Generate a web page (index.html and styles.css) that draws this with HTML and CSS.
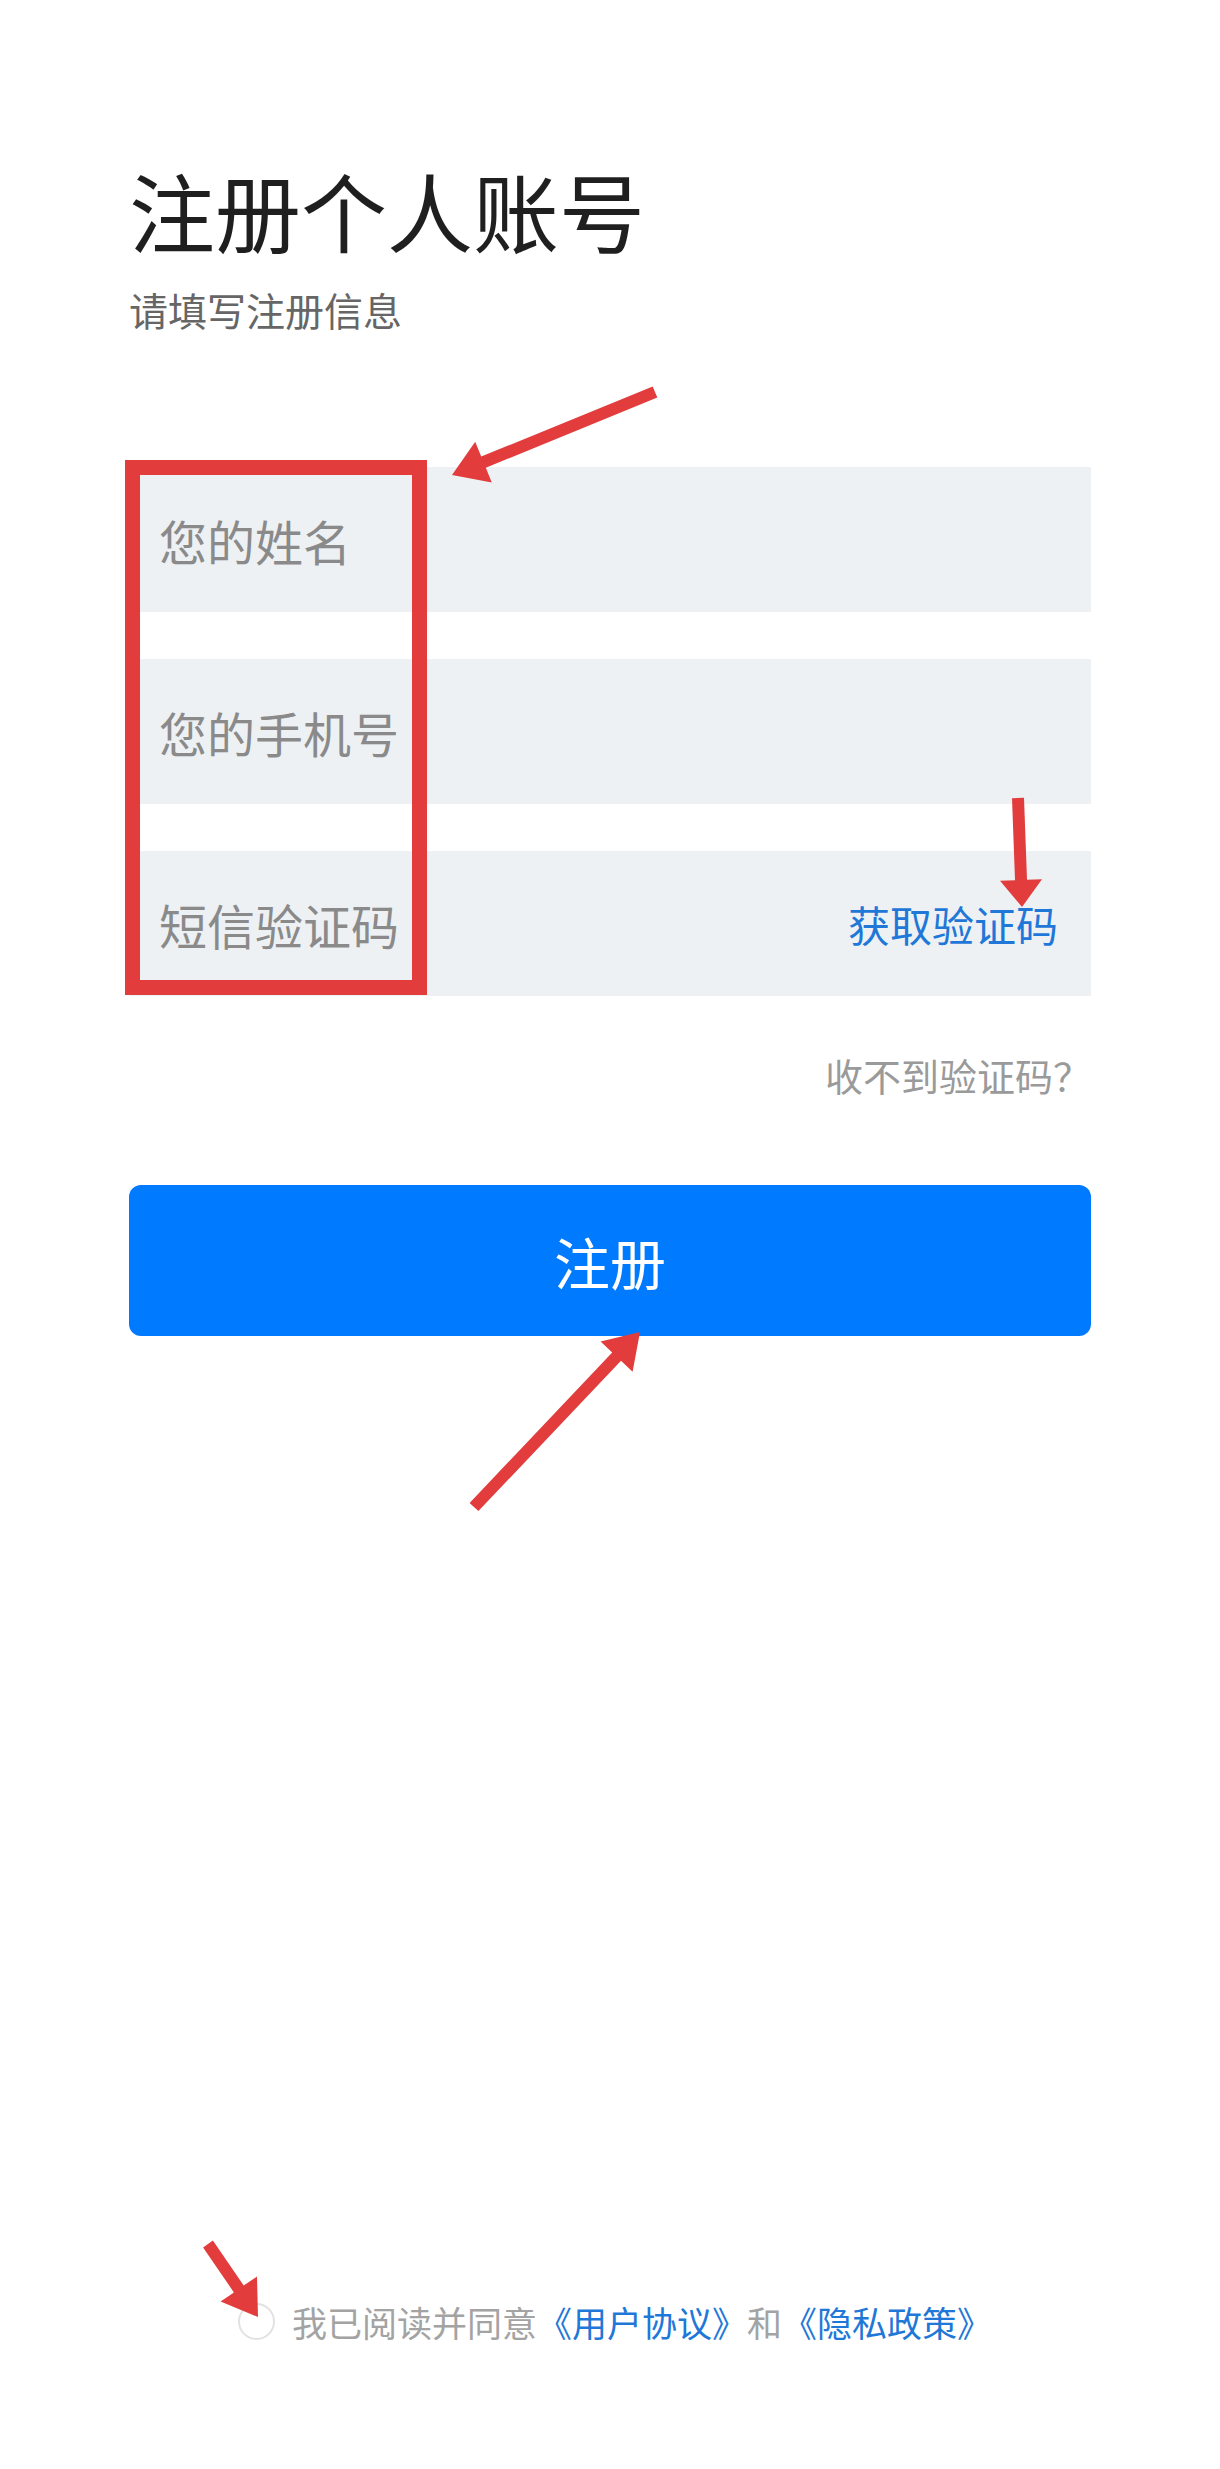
FILE: index.html
```html
<!DOCTYPE html>
<html lang="zh-CN">
<head>
    <meta charset="UTF-8">
    <meta name="viewport" content="width=device-width, initial-scale=1.0">
    <title>注册个人账号</title>
    <link rel="stylesheet" href="styles.css">
</head>
<body>
<div class="page">
    <h1 class="title">注册个人账号</h1>
    <p class="subtitle">请填写注册信息</p>

    <form id="RegForm" class="form" onsubmit="event.preventDefault();">
        <div class="field">
            <input type="text" id="name" name="name" placeholder="您的姓名">
        </div>
        <div class="field">
            <input type="tel" id="mobile" name="mobile" placeholder="您的手机号">
        </div>
        <div class="field">
            <input type="text" id="code" name="code" placeholder="短信验证码">
            <a class="get-code" href="#">获取验证码</a>
        </div>

        <div class="hint">收不到验证码？</div>

        <button type="submit" class="submit">注册</button>
    </form>

    <div class="agree">
        <span class="radio"></span>
        <span>我已阅读并同意<a href="#">《用户协议》</a>和<a href="#">《隐私政策》</a></span>
    </div>

    <!-- red markup drawn over the screenshot -->
    <svg class="marks" width="1220" height="2469" viewBox="0 0 1220 2469">
        <rect x="132.5" y="467.5" width="287" height="520" fill="none" stroke="#e23c3d" stroke-width="15"/>
        <polygon fill="#e23c3d" points="652.7,386.4 481.2,456.6 475.2,441.7 452,475 491.8,482.5 485.8,467.7 657.3,397.6"/>
        <polygon fill="#e23c3d" points="1012,798.2 1015,880.2 1000,880.8 1022,907 1042,879.2 1027,879.8 1024,797.8"/>
        <polygon fill="#e23c3d" points="478.4,1511.1 621,1360.8 632.6,1371.8 640,1332 600.6,1341.6 612.2,1352.6 469.6,1502.9"/>
        <polygon fill="#e23c3d" points="203.1,2247.4 233.9,2292.4 220.6,2301.4 258,2317 257,2276.6 243.7,2285.6 212.9,2240.6"/>
    </svg>
</div>
</body>
</html>
```

FILE: styles.css
```css
body {
    margin: 0;
    background: #fff;
    font-family: "Noto Sans CJK SC", "Noto Sans", sans-serif;
    text-spacing-trim: space-all;
}

.page {
    position: relative;
    min-height: 2469px;
    box-sizing: border-box;
    padding: 167px 129px 129px;
    display: flex;
    flex-direction: column;
}

.title {
    margin: 0;
    font-size: 86px;
    line-height: 1;
    font-weight: 400;
    color: #1f1f1f;
}

.subtitle {
    margin: 37px 0 0;
    font-size: 39px;
    line-height: 1;
    color: #666;
}

.form {
    margin-top: 138px;
    display: flex;
    flex-direction: column;
}

.field {
    height: 145px;
    box-sizing: border-box;
    padding: 0 33px 0 30px;
    background: #eef1f4;
    display: flex;
    align-items: center;
}

.field + .field {
    margin-top: 47px;
}

.field input {
    flex: 1;
    min-width: 0;
    padding: 0;
    border: none;
    outline: none;
    background: transparent;
    font-family: inherit;
    font-size: 48px;
    color: #333;
}

.field input::placeholder {
    color: #8a8a8a;
}

.get-code {
    font-size: 42px;
    color: #1f78d8;
    text-decoration: none;
}

.hint {
    margin-top: 60px;
    text-align: right;
    font-size: 38px;
    line-height: 1;
    color: #9a9a9a;
}

.submit {
    margin-top: 91px;
    height: 151px;
    border: none;
    border-radius: 12px;
    background: #007aff;
    color: #fff;
    font-family: inherit;
    font-size: 56px;
    cursor: pointer;
}

.agree {
    margin-top: auto;
    padding-left: 10px;
    height: 37px;
    display: flex;
    align-items: center;
    justify-content: center;
    gap: 17px;
    font-size: 35px;
    line-height: 1;
    color: #a3a3a3;
}

.agree a {
    color: #1f78d8;
    text-decoration: none;
}

.radio {
    width: 37px;
    height: 37px;
    box-sizing: border-box;
    border: 2px solid #e2e2e2;
    border-radius: 50%;
}

.marks {
    position: absolute;
    top: 0;
    left: 0;
    pointer-events: none;
}
```
